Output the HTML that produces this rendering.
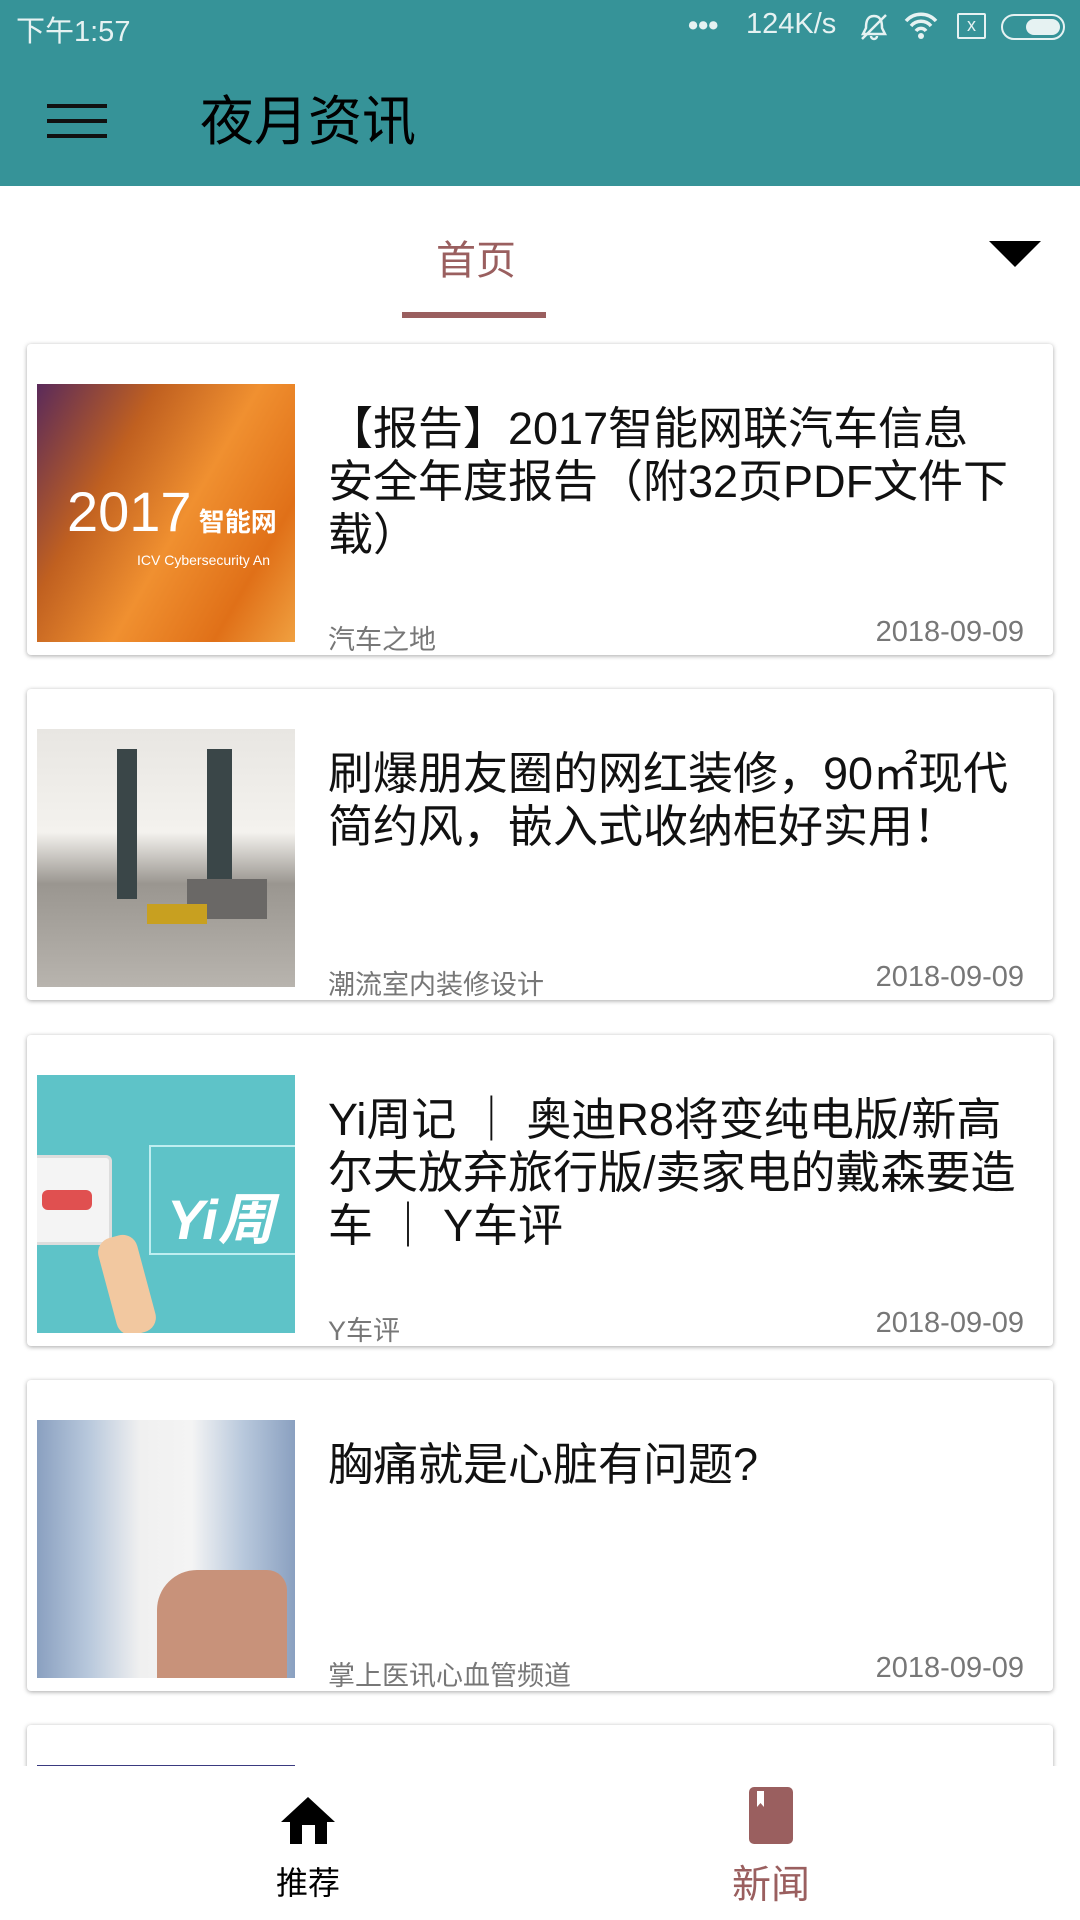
<!DOCTYPE html>
<html><head><meta charset="utf-8"><style>
*{margin:0;padding:0;box-sizing:border-box}
html,body{width:1080px;height:1920px;overflow:hidden}
body{background:#fff;font-family:"Liberation Sans","Noto Sans CJK SC",sans-serif;position:relative}
.hdr{position:absolute;left:0;top:0;width:1080px;height:186px;background:#369398}
.st{position:absolute;top:8px;color:#e6f2f2;font-size:29px}
.ham{position:absolute;left:47px;width:60px;height:4px;background:#111}
.title{position:absolute;left:200px;top:90px;font-size:54px;color:#000;line-height:64px}
.tab{position:absolute;left:436px;top:228px;font-size:40px;color:#9a5f5f}
.ul{position:absolute;left:402px;top:312px;width:144px;height:6px;background:#9a5f5f}
.tri{position:absolute;left:989px;top:241px;width:0;height:0;border-left:26px solid transparent;border-right:26px solid transparent;border-top:26px solid #000}
.card{position:absolute;left:27px;width:1026px;height:311px;background:#fff;border-radius:4px;box-shadow:0 1px 5px rgba(0,0,0,.35);overflow:hidden}
.img{position:absolute;left:10px;top:40px;width:258px;height:258px;overflow:hidden}
.t{position:absolute;left:301px;top:58px;width:720px;font-size:45px;line-height:53px;color:#111;white-space:nowrap}
.src{position:absolute;left:301px;top:274px;font-size:27px;color:#777}
.dt{position:absolute;right:29px;top:272px;font-size:29px;color:#777}
.nav{position:absolute;left:0;top:1766px;width:1080px;height:154px;background:#fff}
</style></head><body>
<div class="hdr">
<div class="st" style="left:16px">下午1:57</div>
<div class="st" style="left:688px;top:10px;font-weight:bold">•••</div>
<div class="st" style="left:746px">124K/s</div>
<svg style="position:absolute;left:858px;top:12px" width="32" height="30"><path d="M16 4 C9 4 8 10 8 16 L5 22 H27 L24 16 C24 10 23 4 16 4 Z M13 24 a3 3 0 0 0 6 0" fill="none" stroke="#e6f2f2" stroke-width="2.5"/><line x1="4" y1="27" x2="28" y2="3" stroke="#e6f2f2" stroke-width="2.5"/></svg>
<svg style="position:absolute;left:904px;top:12px" width="34" height="28"><path d="M2 9 a20 20 0 0 1 30 0 M7 14 a13 13 0 0 1 20 0 M12 19 a6 6 0 0 1 10 0" fill="none" stroke="#e6f2f2" stroke-width="3.5"/><circle cx="17" cy="24" r="3" fill="#e6f2f2"/></svg>
<div style="position:absolute;left:957px;top:13px;width:29px;height:26px;border:2.5px solid #e6f2f2;border-radius:2px;color:#e6f2f2;font-size:18px;text-align:center;line-height:20px">x</div>
<div style="position:absolute;left:1001px;top:14px;width:64px;height:26px;border:2.5px solid #e6f2f2;border-radius:13px"><div style="position:absolute;right:3px;top:3px;width:34px;height:16px;background:#e6f2f2;border-radius:8px"></div></div>
<div class="ham" style="top:104px"></div><div class="ham" style="top:119px"></div><div class="ham" style="top:134px"></div>
<div class="title">夜月资讯</div>
</div>
<div class="tab">首页</div><div class="ul"></div><div class="tri"></div>

<div class="card" style="top:344px">
<div class="img" style="background:linear-gradient(120deg,#5a2a5a 0%,#c06020 30%,#f09030 55%,#e07018 80%,#f0a040 100%)"><div style="position:absolute;left:30px;top:95px;color:#fff;font-size:56px;font-weight:300">2017<span style="font-size:26px;font-weight:bold"> 智能网</span></div><div style="position:absolute;left:100px;top:168px;color:#fff;font-size:14px">ICV Cybersecurity An</div></div>
<div class="t">【报告】2017智能网联汽车信息<br>安全年度报告（附32页PDF文件下<br>载）</div>
<div class="src">汽车之地</div><div class="dt">2018-09-09</div></div>

<div class="card" style="top:689px">
<div class="img" style="background:linear-gradient(180deg,#e8e6e2 0%,#f4f2ee 40%,#9a9690 60%,#b8b4ae 100%)"><div style="position:absolute;left:80px;top:20px;width:20px;height:150px;background:#3a4648"></div><div style="position:absolute;left:170px;top:20px;width:25px;height:150px;background:#3a4648"></div><div style="position:absolute;left:150px;top:150px;width:80px;height:40px;background:#6a6866"></div><div style="position:absolute;left:110px;top:175px;width:60px;height:20px;background:#c8a020"></div></div>
<div class="t">刷爆朋友圈的网红装修，90㎡现代<br>简约风，嵌入式收纳柜好实用！</div>
<div class="src">潮流室内装修设计</div><div class="dt">2018-09-09</div></div>

<div class="card" style="top:1035px">
<div class="img" style="background:#5ec3c8"><div style="position:absolute;left:-20px;top:80px;width:95px;height:90px;background:#f4f4f4;border:3px solid #ddd;border-radius:6px"></div><div style="position:absolute;left:5px;top:115px;width:50px;height:20px;background:#e05050;border-radius:6px"></div><div style="position:absolute;left:112px;top:70px;width:160px;height:110px;border:2px solid #bfeef0"></div><div style="position:absolute;left:130px;top:100px;color:#fff;font-size:56px;font-weight:bold;font-style:italic">Yi周</div><div style="position:absolute;left:70px;top:160px;width:40px;height:100px;background:#f2c8a0;border-radius:15px;transform:rotate(-15deg)"></div></div>
<div class="t">Yi周记 ｜ 奥迪R8将变纯电版/新高<br>尔夫放弃旅行版/卖家电的戴森要造<br>车 ｜ Y车评</div>
<div class="src">Y车评</div><div class="dt">2018-09-09</div></div>

<div class="card" style="top:1380px">
<div class="img" style="background:linear-gradient(90deg,#8aa0c0 0%,#b8c8dc 20%,#f0f0f0 40%,#f4f4f4 60%,#b8c8dc 80%,#8aa0c0 100%)"><div style="position:absolute;left:120px;top:150px;width:130px;height:110px;background:#c8927a;border-radius:40px 20px 0 0"></div></div>
<div class="t">胸痛就是心脏有问题?</div>
<div class="src">掌上医讯心血管频道</div><div class="dt">2018-09-09</div></div>

<div class="card" style="top:1725px;height:60px"><div class="img" style="background:#3a3a80"></div></div>

<div class="nav">
<svg style="position:absolute;left:281px;top:31px" width="55" height="47"><path d="M27 0 L54 25 H46 V47 H34 V28 H21 V47 H9 V25 H0 Z" fill="#000"/></svg>
<div style="position:absolute;left:276px;top:92px;font-size:32px;color:#000">推荐</div>
<svg style="position:absolute;left:749px;top:21px" width="44" height="57"><rect width="44" height="57" rx="5" fill="#9a5f5f"/><path d="M8 4 H15 V20 L11.5 16 L8 20 Z" fill="#fff"/></svg>
<div style="position:absolute;left:732px;top:88px;font-size:39px;color:#9a5f5f">新闻</div>
</div>
</body></html>
